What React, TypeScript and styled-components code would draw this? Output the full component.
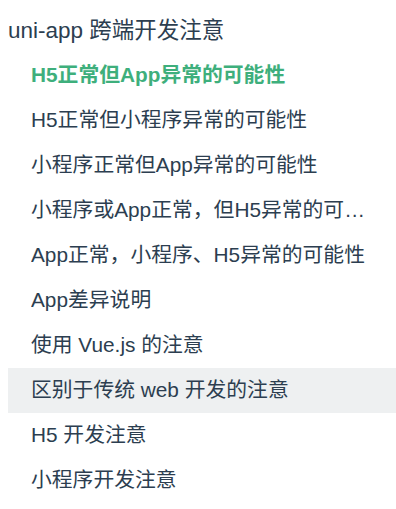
import React from "react";
import styled, { createGlobalStyle } from "styled-components";

const GlobalStyle = createGlobalStyle`
  html, body {
    margin: 0;
    padding: 0;
    background: #ffffff;
  }
  body {
    font-family: "Liberation Sans", "Noto Sans CJK SC", sans-serif;
    color: #2c3e50;
  }
`;

const Sidebar = styled.nav`
  width: 396px;
  padding-left: 8px;
  box-sizing: border-box;
`;

const Heading = styled.div`
  font-size: 22.5px;
  line-height: 30px;
  padding: 16px 0 6.5px;
  color: #2c3e50;
  font-weight: 400;
  white-space: nowrap;
`;

const List = styled.ul`
  list-style: none;
  margin: 0;
  padding: 0;
`;

const Item = styled.li<{ $hover?: boolean }>`
  display: block;
  height: 45px;
  box-sizing: border-box;
  padding: 7.5px 21px 7.5px 23px;
  background: ${(p) => (p.$hover ? "#eef0f1" : "transparent")};
`;

const Link = styled.a<{ $active?: boolean }>`
  display: block;
  font-size: 20.8px;
  line-height: 30px;
  color: ${(p) => (p.$active ? "#3eaf7c" : "#2c3e50")};
  font-weight: ${(p) => (p.$active ? 700 : 400)};
  white-space: nowrap;
  overflow: hidden;
  text-overflow: ellipsis;
  text-decoration: none;
  cursor: pointer;
`;

const items = [
  "H5正常但App异常的可能性",
  "H5正常但小程序异常的可能性",
  "小程序正常但App异常的可能性",
  "小程序或App正常，但H5异常的可能性",
  "App正常，小程序、H5异常的可能性",
  "App差异说明",
  "使用 Vue.js 的注意",
  "区别于传统 web 开发的注意",
  "H5 开发注意",
  "小程序开发注意",
];

export default function App() {
  return (
    <>
      <GlobalStyle />
      <Sidebar>
        <Heading>uni-app 跨端开发注意</Heading>
        <List>
          {items.map((t, i) => (
            <Item key={t} $hover={i === 7}>
              <Link $active={i === 0}>{t}</Link>
            </Item>
          ))}
        </List>
      </Sidebar>
    </>
  );
}
